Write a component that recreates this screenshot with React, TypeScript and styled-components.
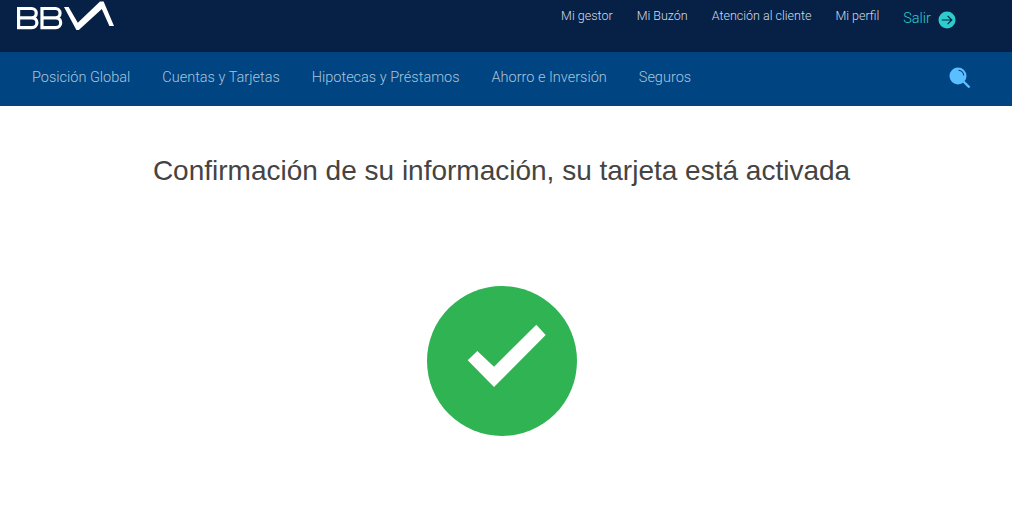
import styled, { createGlobalStyle } from 'styled-components'

const topLinks = ['Mi gestor', 'Mi Buzón', 'Atención al cliente', 'Mi perfil']
const navLinks = ['Posición Global', 'Cuentas y Tarjetas', 'Hipotecas y Préstamos', 'Ahorro e Inversión', 'Seguros']

export default function App (): JSX.Element {
  return (
    <>
      <GlobalStyle />
      <TopBar>
        <Logo viewBox='0 0 97 29' aria-label='BBVA'>
          <g fill='none' stroke='#fff' strokeWidth='3.2'>
            <path d='M1.6 16.8h13a4.65 4.65 0 0 0 0-9.3H1.6V26.6H15a4.9 4.9 0 0 0 0-9.8' />
            <path d='M25 16.8h13.4a4.65 4.65 0 0 0 0-9.3H25V26.6H38.8a4.9 4.9 0 0 0 0-9.8' />
          </g>
          <path d='M47 6h4.6l9.2 15.8L83 .5h3.6L97 25h-4.6L84.8 8 61.8 29h-2.4z' fill='#fff' />
        </Logo>
        <TopLinks>
          {topLinks.map(link => <TopLink key={link}>{link}</TopLink>)}
          <ExitLink>
            Salir
            <ExitIcon viewBox='0 0 18 18'>
              <circle cx='9' cy='9' r='8.5' fill='#2dcccd' />
              <path d='M3.8 9h10M9.6 4.8 13.8 9l-4.2 4.2' fill='none' stroke='#072146' strokeWidth='1.2' />
            </ExitIcon>
          </ExitLink>
        </TopLinks>
      </TopBar>
      <NavBar>
        <NavLinks>
          {navLinks.map(link => <NavLink key={link}>{link}</NavLink>)}
        </NavLinks>
        <SearchIcon viewBox='0 0 22 22'>
          <circle cx='9' cy='9' r='8.5' fill='#5bbeff' />
          <path d='M9.5 3.2a5.6 5.6 0 0 1 5.2 5.4' fill='none' stroke='#004481' strokeWidth='1.1' />
          <path d='M14.5 14.5l6 6' stroke='#5bbeff' strokeWidth='2.4' />
        </SearchIcon>
      </NavBar>
      <Main>
        <Title>Confirmación de su información, su tarjeta está activada</Title>
        <CheckBadge viewBox='0 0 150 150'>
          <circle cx='75' cy='75' r='75' fill='#2fb353' />
          <path d='M40.7 74.3 50.3 65 67 80.7 109.3 38.7 118.7 49 67 101z' fill='#fff' />
        </CheckBadge>
      </Main>
    </>
  )
}

const GlobalStyle = createGlobalStyle`
  html, body {
    margin: 0;
    padding: 0;
    background: #fff;
  }
`

const TopBar = styled.header`
  display: flex;
  justify-content: space-between;
  box-sizing: border-box;
  height: 52px;
  padding: 1px 56px 0 17px;
  background: #072146;
  overflow: hidden;
`

const Logo = styled.svg`
  width: 97px;
  height: 29px;
`

const TopLinks = styled.nav`
  display: flex;
  align-items: flex-start;
  gap: 24px;
  padding-top: 6px;
`

const TopLink = styled.a`
  font: 300 12.5px/18px Roboto, sans-serif;
  color: #d4dce6;
`

const ExitLink = styled.a`
  display: flex;
  align-items: center;
  gap: 7px;
  margin-top: 2px;
  font: 300 14.5px/18px Roboto, sans-serif;
  color: #2dcccd;
`

const ExitIcon = styled.svg`
  width: 18px;
  height: 18px;
  margin-top: 2px;
`

const NavBar = styled.nav`
  display: flex;
  justify-content: space-between;
  align-items: center;
  box-sizing: border-box;
  height: 54px;
  padding: 0 41px 0 32px;
  background: #004481;
`

const NavLinks = styled.div`
  display: flex;
  gap: 32px;
  margin-top: -3px;
`

const NavLink = styled.a`
  font: 300 14.5px/20px Roboto, sans-serif;
  color: #a9c4dc;
`

const SearchIcon = styled.svg`
  width: 22px;
  height: 22px;
  margin-top: -2px;
`

const Main = styled.main`
  display: flex;
  flex-direction: column;
  align-items: center;
  width: 1003px;
  height: 424px;
`

const Title = styled.h1`
  margin: 49px 0 0;
  font: 400 28px/32px 'Liberation Sans', Arial, sans-serif;
  color: #444;
`

const CheckBadge = styled.svg`
  width: 150px;
  height: 150px;
  margin-top: 99px;
`
